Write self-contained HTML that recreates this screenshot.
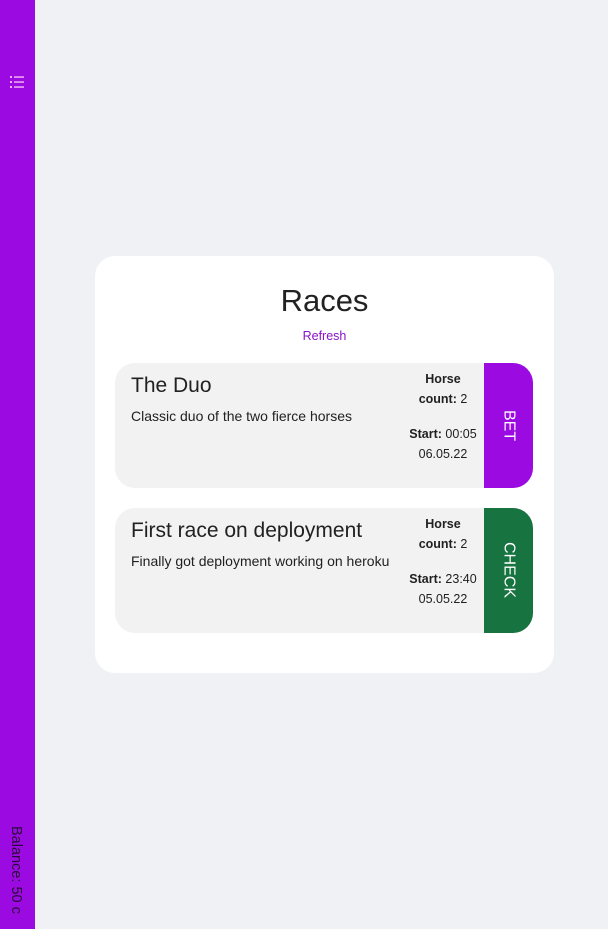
<!DOCTYPE html>
<html><head><meta charset="utf-8"><style>
*{box-sizing:border-box;margin:0;padding:0}
body{width:608px;height:929px;background:#f0f1f5;font-family:"Liberation Sans","DejaVu Sans",sans-serif;color:#212121;position:relative;overflow:hidden}
.side{position:absolute;left:0;top:0;width:35px;height:929px;background:#9b0ae0}
.bal{position:absolute;left:8px;top:826px;writing-mode:vertical-rl;font-size:14.5px;color:#2a0a3a;white-space:nowrap}
.card{position:absolute;left:95px;top:256px;width:459px;height:417px;background:#fff;border-radius:20px}
h1{position:absolute;left:0;width:459px;top:27px;text-align:center;font-size:31px;font-weight:normal;color:#222}
.ref{position:absolute;left:0;width:459px;top:73px;text-align:center;font-size:12.5px;color:#8a12c8}
.race{position:absolute;left:20px;width:418px;height:125px;background:#f2f2f2;border-radius:20px;overflow:hidden}
.t{position:absolute;left:16px;top:11px;font-size:21px;white-space:nowrap}
.d{position:absolute;left:16px;top:45px;font-size:14px;white-space:nowrap}
.info{position:absolute;left:286px;width:84px;top:6px;text-align:center;font-size:12.5px;line-height:20px}
.btn{position:absolute;right:0;top:0;width:49px;height:125px;color:#fff;font-size:16px;display:flex;align-items:center;justify-content:center}
.btn span{writing-mode:vertical-rl}
</style></head><body>
<div class="side">
<svg style="position:absolute;left:10px;top:75px" width="15" height="14" viewBox="0 0 15 14"><g fill="#f4b0f4"><rect x="0" y="1" width="2" height="2"/><rect x="0" y="6" width="2" height="2"/><rect x="0" y="11" width="2" height="2"/><rect x="4" y="1.3" width="10" height="1.5"/><rect x="4" y="6.3" width="10" height="1.5"/><rect x="4" y="11.3" width="10" height="1.5"/></g></svg>
<div class="bal">Balance: 50 c</div>
</div>
<div class="card">
<h1>Races</h1>
<div class="ref">Refresh</div>
<div class="race" style="top:107px">
<div class="t">The Duo</div>
<div class="d">Classic duo of the two fierce horses</div>
<div class="info"><b>Horse<br>count:</b> 2<br><div style="height:15px"></div><b>Start:</b> 00:05<br>06.05.22</div>
<div class="btn" style="background:#9b0ae0"><span>BET</span></div>
</div>
<div class="race" style="top:252px">
<div class="t">First race on deployment</div>
<div class="d">Finally got deployment working on heroku</div>
<div class="info"><b>Horse<br>count:</b> 2<br><div style="height:15px"></div><b>Start:</b> 23:40<br>05.05.22</div>
<div class="btn" style="background:#17733f"><span>CHECK</span></div>
</div>
</div>
</body></html>
